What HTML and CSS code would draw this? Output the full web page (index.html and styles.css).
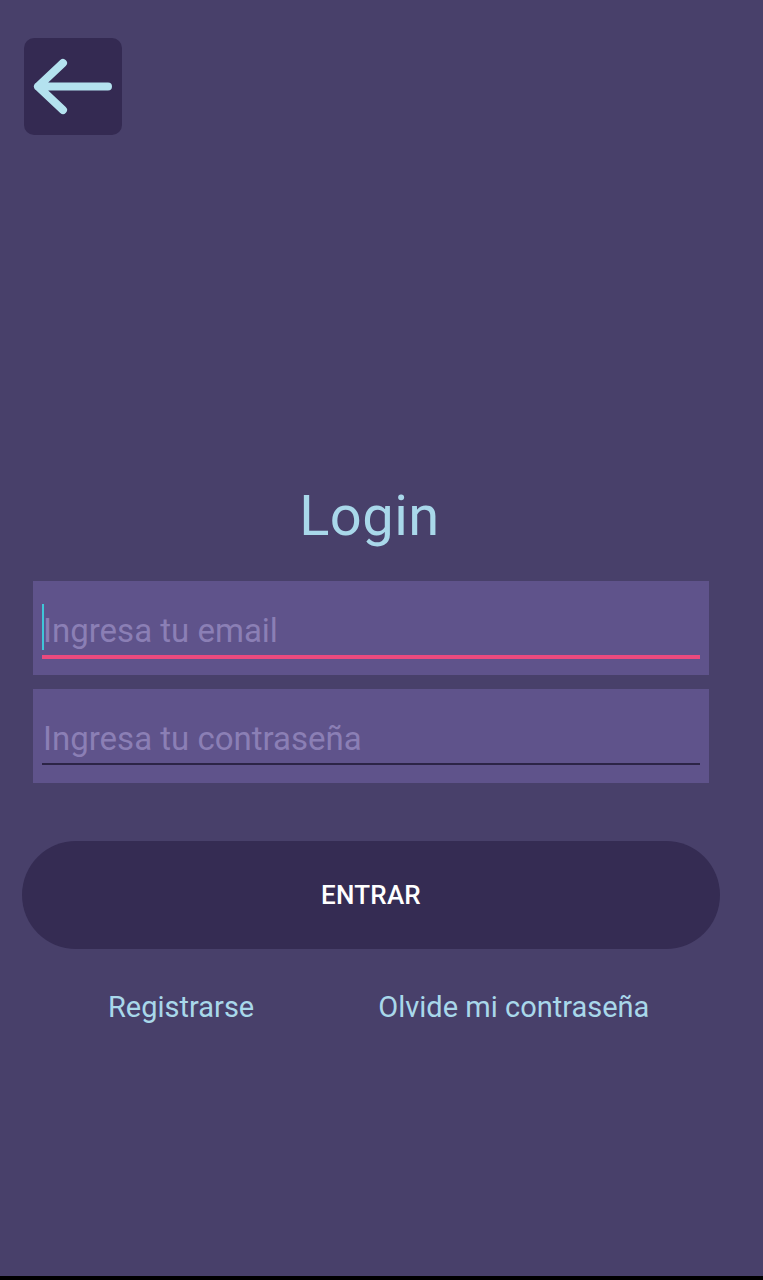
FILE: index.html
```html
<!DOCTYPE html>
<html lang="es">
<head>
<meta charset="utf-8">
<title>Login</title>
<link rel="stylesheet" href="styles.css">
</head>
<body>
<div class="screen">
  <div class="back">
    <svg width="98" height="97" viewBox="0 0 98 97">
      <path d="M39 25 L14 48.5 L39 72 M14 48.5 H84" fill="none" stroke="#b4e2ef" stroke-width="8" stroke-linecap="round" stroke-linejoin="round"/>
    </svg>
  </div>
  <h1 class="title">Login</h1>
  <div class="field">
    <div class="input focused"><span class="cursor"></span><span class="ph">Ingresa tu email</span></div>
  </div>
  <div class="field">
    <div class="input"><span class="ph">Ingresa tu contraseña</span></div>
  </div>
  <button class="btn">ENTRAR</button>
  <div class="links">
    <span class="link">Registrarse</span>
    <span class="link">Olvide mi contraseña</span>
  </div>
</div>
</body>
</html>
```
FILE: styles.css
```css
html { background: #000; }
body { margin: 0; }
.screen {
  height: 1276px;
  background: #48406a;
  font-family: Roboto, "Liberation Sans", sans-serif;
  display: flex;
  flex-direction: column;
  overflow: hidden;
}
.back {
  margin: 38px 0 0 24px;
  width: 98px;
  height: 97px;
  background: #342a52;
  border-radius: 10px;
}
.back svg { display: block; }
.title {
  margin: 346px 0 0 0;
  text-align: center;
  font-weight: 400;
  font-size: 56px;
  line-height: 70px;
  color: #a9d8ea;
  letter-spacing: 0.5px;
  padding-right: 24px;
}
.field {
  margin: 0 54px 0 33px;
  height: 94px;
  background: #5f538b;
  padding: 0 9px;
  box-sizing: border-box;
}
.title + .field { margin-top: 30px; }
.field + .field { margin-top: 14px; }
.input {
  position: relative;
  height: 76px;
  border-bottom: 2px solid #2c2446;
  display: flex;
  align-items: flex-end;
  padding-bottom: 4px;
  box-sizing: border-box;
}
.input.focused {
  height: 78px;
  border-bottom: 4px solid #ec4a7e;
}
.ph {
  font-size: 33px;
  line-height: 40px;
  color: #8b7fb5;
  padding-left: 1px;
}
.cursor {
  position: absolute;
  left: 0;
  top: 23px;
  width: 2px;
  height: 46px;
  background: #3fc6d8;
}
.btn {
  margin: 58px 43px 0 22px;
  height: 108px;
  border: none;
  border-radius: 54px;
  background: #352c53;
  color: #fff;
  font-family: Roboto, "Liberation Sans", sans-serif;
  font-weight: 500;
  font-size: 26px;
  letter-spacing: 0.2px;
}
.links {
  margin-top: 40px;
  display: flex;
  padding-left: 108px;
  gap: 124px;
}
.link {
  font-size: 29px;
  line-height: 36px;
  color: #a9d8ea;
}
```
